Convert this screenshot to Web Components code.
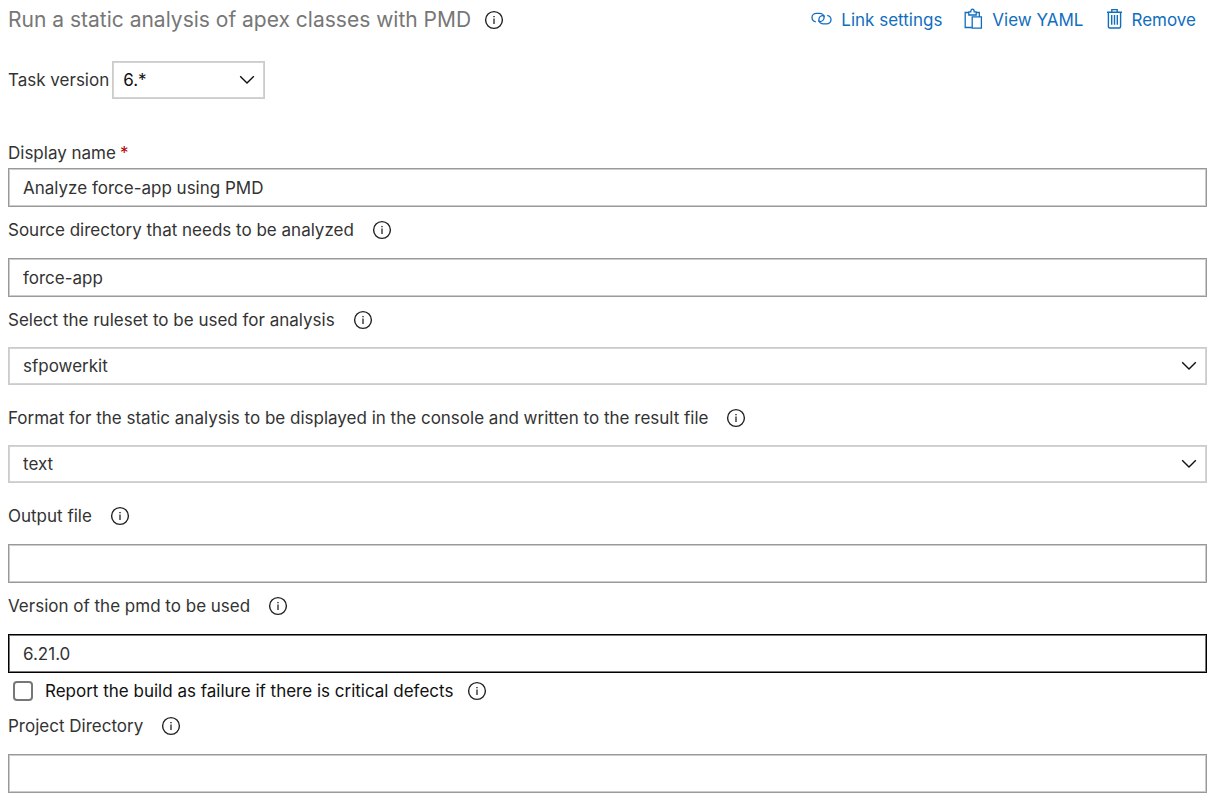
<!DOCTYPE html>
<html lang="en">
<head>
<meta charset="utf-8">
<meta name="viewport" content="width=device-width, initial-scale=1">
<title>Run a static analysis of apex classes with PMD</title>
<style>
  body { margin: 0; background: #fff; color: #333; font: 17px/24px Inter, "Liberation Sans", sans-serif; }
</style>
</head>
<body>
<task-editor></task-editor>
<script>
const define = (name, html, setup) => {
  const template = document.createElement('template');
  template.innerHTML = html;
  customElements.define(name, class extends HTMLElement {
    connectedCallback() {
      if (this.shadowRoot) return;
      this.attachShadow({ mode: 'open' }).append(template.content.cloneNode(true));
      if (setup) setup(this, this.shadowRoot);
    }
  });
};

define('info-tip', `
<style>
  :host { display: block; flex: none; }
  button { display: block; width: 20px; height: 20px; padding: 0; border: 0; background: none; color: #222; }
  svg { display: block; }
</style>
<button type="button" aria-label="More information">
  <svg width="20" height="20" viewBox="0 0 20 20" fill="none" stroke="currentColor">
    <circle cx="10" cy="10" r="8.4" stroke-width="1.4"/>
    <path d="M10 8.5V14" stroke-width="1.3"/><path d="M10 6V7.3" stroke-width="1.4"/>
  </svg>
</button>`);

define('text-field', `
<style>
  :host { display: block; padding-top: 11px; }
  .head { display: flex; align-items: center; gap: 18px; margin-bottom: 16px; }
  :host([compact]) .head { margin-bottom: 3px; }
  :host([plain]) info-tip { display: none; }
  .required { color: #b50000; margin-left: 4px; }
  :host(:not([required])) .required { display: none; }
  input { display: block; box-sizing: border-box; width: 100%; height: 39px; margin: 0; padding: 0 14px;
    border: 1px solid #999; border-radius: 0; box-shadow: inset 0 0 0 1px #ccc; outline: 0;
    background: #fff; color: #333; font: inherit; }
  :host([active]) input { border-color: #000; box-shadow: inset 0 0 0 1px #777; }
</style>
<div class="head"><label for="input"><slot></slot><span class="required">*</span></label><info-tip></info-tip></div>
<input id="input" type="text">`, (host, root) => {
  root.querySelector('input').value = host.getAttribute('value') || '';
});

define('select-field', `
<style>
  :host { display: block; padding: 11px 0 10px; }
  .head { display: flex; align-items: center; gap: 18px; margin-bottom: 15px; }
  .box { display: grid; align-items: center; }
  select, svg { grid-area: 1 / 1; }
  select { appearance: none; width: 100%; height: 38px; margin: 0; padding: 0 14px;
    border: 1px solid #ccc; border-radius: 0; box-shadow: inset 0 0 0 1px #d4d4d4; outline: 0;
    background: #fff; color: #333; font: inherit; }
  svg { justify-self: end; margin-right: 10px; pointer-events: none; }
  :host([inline]) { display: flex; align-items: center; gap: 3px; padding: 0; }
  :host([inline]) .head { margin: 0; }
  :host([inline]) info-tip { display: none; }
  :host([inline]) .box { width: 153px; }
  :host([inline]) select { padding: 0 10px; color: #111; }
</style>
<div class="head"><label for="select"><slot></slot></label><info-tip></info-tip></div>
<div class="box">
  <select id="select"><option></option></select>
  <svg width="16" height="10" viewBox="0 0 16 10" fill="none" stroke="#111" stroke-width="1.4"><path d="M1.2 1.3 8 8.1l6.8-6.8"/></svg>
</div>`, (host, root) => {
  root.querySelector('option').textContent = host.getAttribute('value');
});

define('check-field', `
<style>
  :host { display: flex; align-items: center; padding: 6px 0 0 5px; color: #111; }
  input { appearance: none; flex: none; box-sizing: border-box; width: 20px; height: 20px; margin: 0 12px 0 0;
    border: 2px solid #777; border-radius: 4px; background: #fff; }
  input:checked { background: #106ebe; }
  info-tip { margin-left: 14px; }
</style>
<input id="check" type="checkbox"><label for="check"><slot></slot></label><info-tip></info-tip>`);

define('action-link', `
<style>
  :host { display: block; }
  a { display: flex; align-items: center; gap: 9px; color: #106ebe; text-decoration: none; white-space: nowrap; }
  ::slotted(svg) { display: block; flex: none; }
</style>
<a href="#"><slot name="icon"></slot><slot></slot></a>`);

define('task-header', `
<style>
  :host { display: flex; justify-content: space-between; align-items: center; height: 40px; padding-right: 11px; }
  .title, nav { display: flex; align-items: center; }
  .title { gap: 13px; }
  nav { gap: 22px; }
  h1 { margin: 0; color: #777; font-size: 21px; line-height: 24px; font-weight: 400; }
</style>
<div class="title"><h1><slot></slot></h1><info-tip></info-tip></div>
<nav>
  <action-link>
    <svg slot="icon" width="21" height="20" viewBox="0 0 21 20" fill="none" stroke="currentColor" stroke-width="1.3">
      <path d="M4.8 11.8C2.6 11.3 1 9.5 1 7.4 1 5 3 3.4 5.5 3.4h3c2.5 0 4.6 1.7 4.6 4.1 0 2.2-1.9 4.1-4.2 4.1-.8 0-1.4-.4-1.4-1.1"/>
      <path d="M16.2 5.4c2.2.5 3.8 2.2 3.8 4.3 0 2.4-2 4.1-4.5 4.1h-3c-2.5 0-4.6-1.7-4.6-4.1 0-2.2 1.9-4.1 4.2-4.1.8 0 1.4.4 1.4 1.1"/>
    </svg>Link settings</action-link>
  <action-link>
    <svg slot="icon" width="19" height="24" viewBox="0 0 19 24" fill="none" stroke="currentColor" stroke-width="1.3">
      <path d="M7.5 19.5H1.2v-15h3.6M12 4.5h3.3v4M4.8 7V3.8h2c0-1.8.6-2.6 1.7-2.6s1.7.8 1.7 2.6h2V7zM8.2 8.8h9.2v11.4H8.2z"/>
    </svg>View YAML</action-link>
  <action-link>
    <svg slot="icon" width="17" height="24" viewBox="0 0 17 24" fill="none" stroke="currentColor" stroke-width="1.4">
      <path d="M1 4.3h15M5.8 4V1.6h5.4V4M2.4 4.3v14.2q0 1.5 1.5 1.5h9.2q1.5 0 1.5-1.5V4.3M5.7 7v9.8M8.5 7v9.8M11.3 7v9.8"/>
    </svg>Remove</action-link>
</nav>`);

define('task-editor', `
<style>
  :host { display: block; padding: 0 13px 14px 8px; }
  select-field[inline] { margin: 21px 0 31px; }
</style>
<task-header>Run a static analysis of apex classes with PMD</task-header>
<select-field inline value="6.*">Task version</select-field>
<text-field compact plain required value="Analyze force-app using PMD">Display name</text-field>
<text-field value="force-app">Source directory that needs to be analyzed</text-field>
<select-field value="sfpowerkit">Select the ruleset to be used for analysis</select-field>
<select-field value="text">Format for the static analysis to be displayed in the console and written to the result file</select-field>
<text-field>Output file</text-field>
<text-field active value="6.21.0">Version of the pmd to be used</text-field>
<check-field>Report the build as failure if there is critical defects</check-field>
<text-field>Project Directory</text-field>`);
</script>
</body>
</html>
